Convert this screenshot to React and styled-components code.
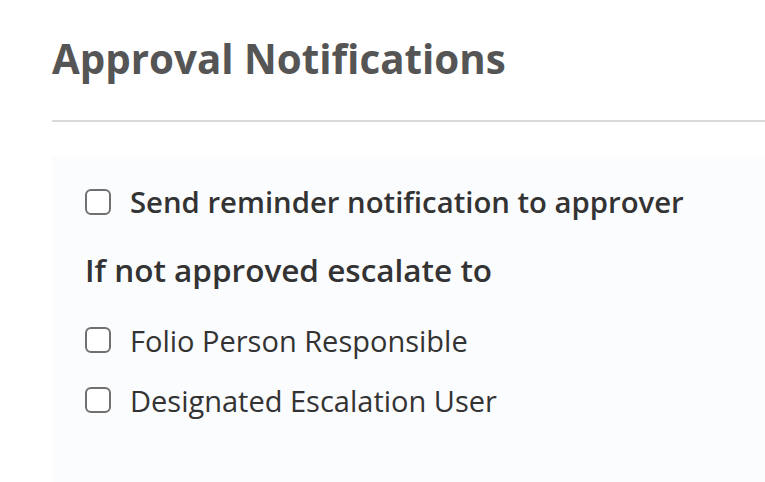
import React from 'react';
import styled, { createGlobalStyle } from 'styled-components';

const GlobalStyle = createGlobalStyle`
  html, body {
    margin: 0;
    padding: 0;
    background: #ffffff;
    font-family: "Open Sans", "Noto Sans", sans-serif;
  }
`;

const Page = styled.div`
  padding: 33px 0 0 52px;
  height: 482px;
  box-sizing: border-box;
  overflow: hidden;
`;

const Title = styled.h1`
  margin: 0;
  font-size: 40.3px;
  font-weight: 700;
  color: #555555;
  line-height: 52px;
`;

const Divider = styled.hr`
  margin: 35px 0 0;
  border: none;
  border-top: 2px solid #dadada;
`;

const Panel = styled.div`
  margin-top: 35px;
  background: #fbfcfe;
  padding: 24px 33px 60px;
  display: flex;
  flex-direction: column;
  height: 100%;
`;

const Row = styled.label`
  display: flex;
  align-items: center;
  gap: 19px;
  height: 42px;
  margin-bottom: ${p => p.$gap ?? 18}px;
  font-size: ${p => (p.$strong ? 29.3 : 29)}px;
  font-weight: ${p => (p.$strong ? 600 : 400)};
  color: #333333;
`;

const Box = styled.span`
  width: 26px;
  height: 26px;
  box-sizing: border-box;
  border: 2px solid #707070;
  border-radius: 6px;
  background: #ffffff;
  flex-shrink: 0;
`;

const SubHeading = styled.div`
  font-size: 31.5px;
  font-weight: 600;
  color: #333333;
  line-height: 42px;
  margin-bottom: 28px;
`;

export default function App() {
  return (
    <>
      <GlobalStyle />
      <Page>
        <Title>Approval Notifications</Title>
        <Divider />
        <Panel>
          <Row $strong $gap={26}>
            <Box />
            Send reminder notification to approver
          </Row>
          <SubHeading>If not approved escalate to</SubHeading>
          <Row>
            <Box />
            Folio Person Responsible
          </Row>
          <Row>
            <Box />
            Designated Escalation User
          </Row>
        </Panel>
      </Page>
    </>
  );
}
